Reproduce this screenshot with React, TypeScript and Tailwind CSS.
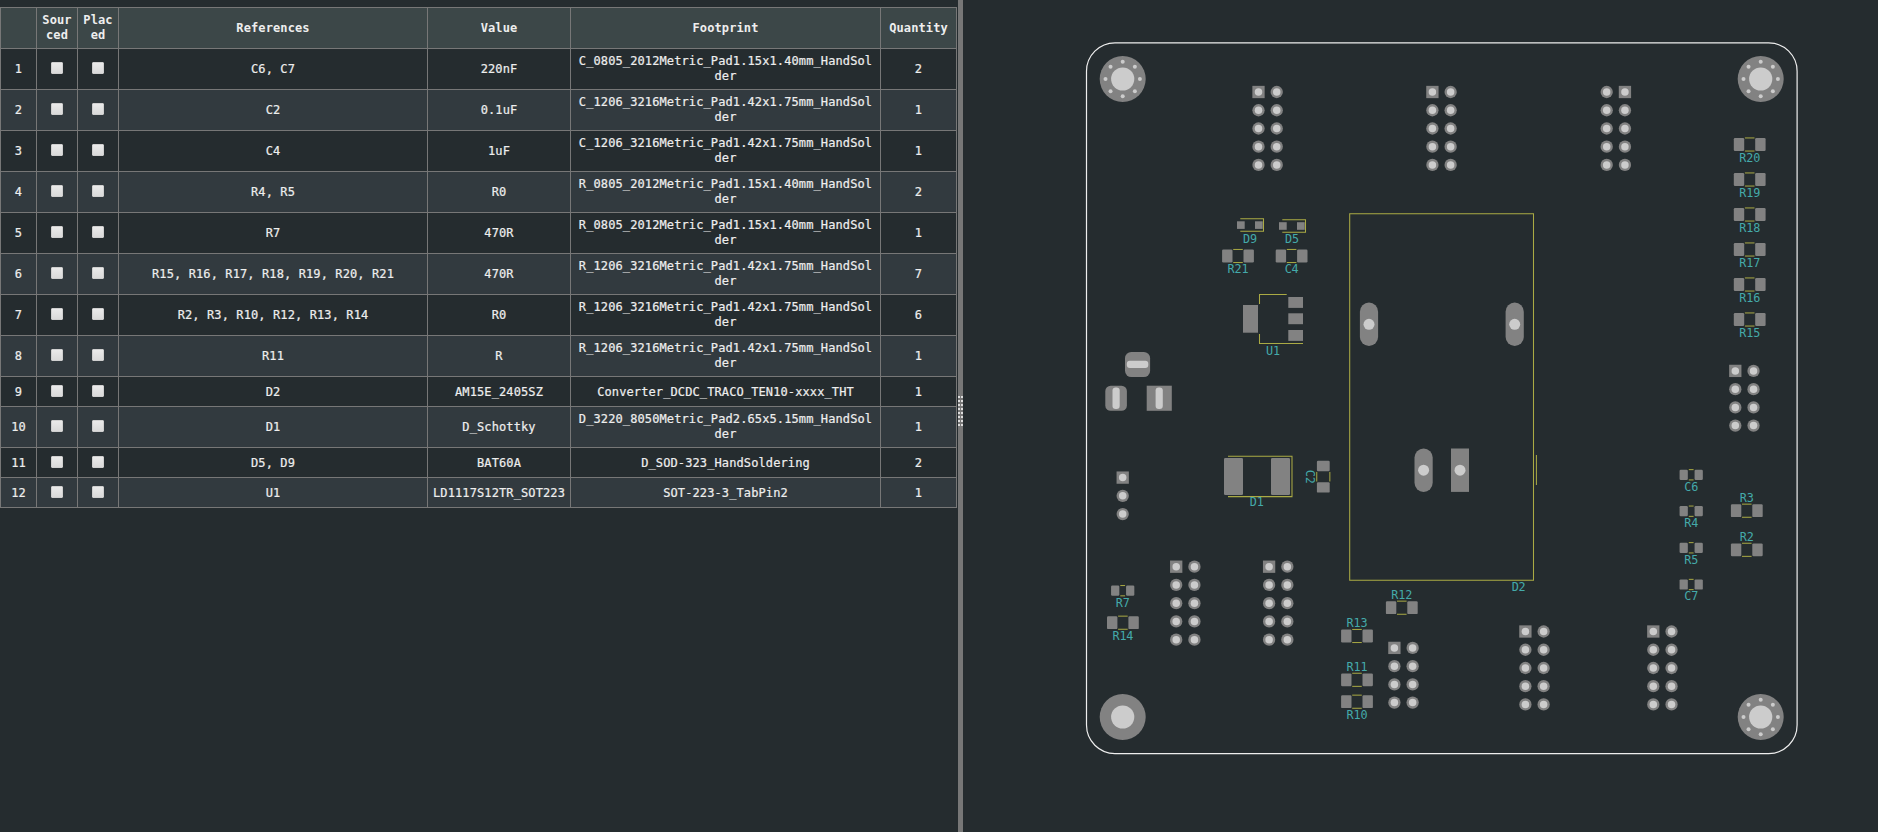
import React from "react";

type BomRow = { refs: string; value: string; footprint: string; qty: number; short?: boolean };

const F0805C = "C_0805_2012Metric_Pad1.15x1.40mm_HandSolder";
const F1206C = "C_1206_3216Metric_Pad1.42x1.75mm_HandSolder";
const F0805R = "R_0805_2012Metric_Pad1.15x1.40mm_HandSolder";
const F1206R = "R_1206_3216Metric_Pad1.42x1.75mm_HandSolder";

const rows: BomRow[] = [
  { refs: "C6, C7", value: "220nF", footprint: F0805C, qty: 2 },
  { refs: "C2", value: "0.1uF", footprint: F1206C, qty: 1 },
  { refs: "C4", value: "1uF", footprint: F1206C, qty: 1 },
  { refs: "R4, R5", value: "R0", footprint: F0805R, qty: 2 },
  { refs: "R7", value: "470R", footprint: F0805R, qty: 1 },
  { refs: "R15, R16, R17, R18, R19, R20, R21", value: "470R", footprint: F1206R, qty: 7 },
  { refs: "R2, R3, R10, R12, R13, R14", value: "R0", footprint: F1206R, qty: 6 },
  { refs: "R11", value: "R", footprint: F1206R, qty: 1 },
  { refs: "D2", value: "AM15E_2405SZ", footprint: "Converter_DCDC_TRACO_TEN10-xxxx_THT", qty: 1, short: true },
  { refs: "D1", value: "D_Schottky", footprint: "D_3220_8050Metric_Pad2.65x5.15mm_HandSolder", qty: 1 },
  { refs: "D5, D9", value: "BAT60A", footprint: "D_SOD-323_HandSoldering", qty: 2, short: true },
  { refs: "U1", value: "LD1117S12TR_SOT223", footprint: "SOT-223-3_TabPin2", qty: 1, short: true },
];

const CELL = "border-r border-b border-[#777777] px-[4px] pb-0 align-middle break-all";

function Checkbox() {
  return (
    <button
      type="button"
      role="checkbox"
      aria-checked="false"
      className="mx-auto block size-3 rounded-[1px] border border-[#cfcfcf] bg-linear-to-b from-[#eaeaea] to-[#dadada]"
    />
  );
}

function BomTable() {
  return (
    <table className="mt-[7px] w-[957px] table-fixed border-separate border-spacing-0 border-t border-l border-[#777777] text-center font-['DejaVu_Sans_Mono',monospace] text-[12px] leading-[15px] tracking-[0.11px] text-[#eeeeee]">
      <colgroup>
        <col className="w-[36px]" />
        <col className="w-[41px]" />
        <col className="w-[41px]" />
        <col className="w-[309px]" />
        <col className="w-[143px]" />
        <col className="w-[310px]" />
        <col className="w-[76px]" />
      </colgroup>
      <thead>
        <tr className="h-[41px] bg-[#3c4748] font-bold">
          <th className={`${CELL} pt-0`} />
          <th className={`${CELL} pt-0`}>Sourced</th>
          <th className={`${CELL} pt-0`}>Placed</th>
          <th className={`${CELL} pt-0`}>References</th>
          <th className={`${CELL} pt-0`}>Value</th>
          <th className={`${CELL} pt-0`}>Footprint</th>
          <th className={`${CELL} pt-0`}>Quantity</th>
        </tr>
      </thead>
      <tbody className="[-webkit-text-stroke:0.2px_#eeeeee]">
        {rows.map((r, i) => {
          const cell = `${CELL} ${r.short ? "pt-px" : "pt-0"}`;
          const check = `border-r border-b border-[#777777] px-[4px] pt-0 align-middle ${r.short ? "pb-px" : "pb-[3px]"}`;
          return (
            <tr key={r.refs} className={`${r.short ? "h-[30px]" : "h-[41px]"} ${i % 2 ? "bg-[#323a3f]" : "bg-[#252c2f]"}`}>
              <td className={cell}>{i + 1}</td>
              <td className={check}><Checkbox /></td>
              <td className={check}><Checkbox /></td>
              <td className={cell}>{r.refs}</td>
              <td className={cell}>{r.value}</td>
              <td className={cell}>
                <div className="px-[3px]">{r.footprint}</div>
              </td>
              <td className={cell}>{r.qty}</td>
            </tr>
          );
        })}
      </tbody>
    </table>
  );
}

const PAD = "#828282";
const HOLE = "#cccccc";
const SILK = "#aaaa44";
const TEXT = "#44aaaa";
const PITCH = 18.24;

function Label({ x, y, children, turn = false }: { x: number; y: number; children: string; turn?: boolean }) {
  return (
    <text
      x={x}
      y={y}
      textAnchor="middle"
      fontSize="11.8"
      letterSpacing="-0.15"
      fill={TEXT}
      className="font-['DejaVu_Sans_Mono',monospace]"
      transform={turn ? `rotate(90 ${x} ${y})` : undefined}
    >
      {children}
    </text>
  );
}

function Header({ x, y, n, cols = 2, square = 0 }: { x: number; y: number; n: number; cols?: number; square?: number }) {
  const pins: React.ReactNode[] = [];
  for (let r = 0; r < n; r++) {
    for (let c = 0; c < cols; c++) {
      const cx = x + c * PITCH;
      const cy = y + r * PITCH;
      pins.push(
        <g key={`${r}-${c}`}>
          {r === 0 && c === square ? (
            <rect x={cx - 6.15} y={cy - 6.15} width="12.3" height="12.3" fill={PAD} />
          ) : (
            <circle cx={cx} cy={cy} r="6.15" fill={PAD} />
          )}
          <circle cx={cx} cy={cy} r="3.75" fill={HOLE} />
        </g>,
      );
    }
  }
  return <g>{pins}</g>;
}

function Chip({ x, y, small = false, turn = false }: { x: number; y: number; small?: boolean; turn?: boolean }) {
  const off = small ? 7.5 : 10.7;
  const w = small ? 8.26 : 10.4;
  const h = small ? 10.2 : 12.8;
  const sx = small ? 2 : 4.4;
  const sy = small ? 5.15 : 6.55;
  return (
    <g transform={`translate(${x} ${y})${turn ? " rotate(90)" : ""}`}>
      <rect x={-off - w / 2} y={-h / 2} width={w} height={h} rx="1.2" fill={PAD} />
      <rect x={off - w / 2} y={-h / 2} width={w} height={h} rx="1.2" fill={PAD} />
      <path d={`M${-sx} ${-sy}H${sx}M${-sx} ${sy}H${sx}`} stroke={SILK} strokeWidth="1" strokeLinecap="round" />
    </g>
  );
}

function Mount({ x, y, vias = true }: { x: number; y: number; vias?: boolean }) {
  return (
    <g>
      <circle cx={x} cy={y} r="23" fill={PAD} />
      <circle cx={x} cy={y} r="11.6" fill={HOLE} />
      {vias &&
        [0, 1, 2, 3, 4, 5, 6, 7].map((k) => (
          <circle
            key={k}
            cx={x + 17.2 * Math.cos((k * Math.PI) / 4)}
            cy={y + 17.2 * Math.sin((k * Math.PI) / 4)}
            r="2"
            fill={HOLE}
          />
        ))}
    </g>
  );
}

const bigChips: [number, number][] = [
  [1749.7, 144.5], [1749.7, 179.5], [1749.7, 214.5], [1749.7, 249.5], [1749.7, 284.5], [1749.7, 319.5],
  [1746.8, 510.7], [1746.8, 549.8], [1122.9, 622.7], [1401.8, 607.7], [1357, 636], [1357, 679.8],
  [1357, 701.7], [1238, 256], [1291.6, 256],
];
const smallChips: [number, number][] = [
  [1691.2, 474.8], [1691.2, 511.2], [1691.2, 547.8], [1691.2, 584.5], [1122.7, 590.7],
];
const labels: [string, number, number][] = [
  ["R20", 1749.7, 161.5], ["R19", 1749.7, 196.5], ["R18", 1749.7, 231.5], ["R17", 1749.7, 266.5],
  ["R16", 1749.7, 301.5], ["R15", 1749.7, 336.5], ["C6", 1691.2, 490.6], ["R4", 1691.2, 527.2],
  ["R5", 1691.2, 563.8], ["C7", 1691.2, 600.4], ["R3", 1746.8, 501.6], ["R2", 1746.8, 540.8],
  ["R7", 1122.7, 606.6], ["R14", 1122.9, 639.6], ["R12", 1401.8, 598.8], ["R13", 1357, 627.2],
  ["R11", 1357, 670.8], ["R10", 1357, 718.8], ["R21", 1238, 273.2], ["C4", 1291.6, 273.2],
  ["D9", 1250, 242.5], ["D5", 1292, 243], ["U1", 1273, 355.2], ["D1", 1256.8, 506.2], ["D2", 1518.6, 590.5],
];

function Board() {
  return (
    <svg viewBox="963 0 915 832" className="block h-[832px] w-[915px]" fill="none">
      <rect x="1086.5" y="42.8" width="710.6" height="710.8" rx="28.5" stroke="#eeeeee" strokeWidth="1.2" />

      <Mount x={1122.7} y={79} />
      <Mount x={1760.7} y={79} />
      <Mount x={1122.7} y={717} vias={false} />
      <Mount x={1760.7} y={717} />

      <Header x={1258.5} y={92} n={5} />
      <Header x={1432.4} y={92} n={5} />
      <Header x={1606.7} y={92} n={5} square={1} />
      <Header x={1176.2} y={566.7} n={5} />
      <Header x={1269.1} y={566.7} n={5} />
      <Header x={1394.4} y={647.9} n={4} />
      <Header x={1525.4} y={631.5} n={5} />
      <Header x={1653.3} y={631.5} n={5} />
      <Header x={1735.3} y={370.9} n={4} />
      <Header x={1122.7} y={477.6} n={3} cols={1} />

      <g fill={PAD}>
        <rect x="1125" y="351.9" width="25.1" height="25.1" rx="6.3" />
        <rect x="1105.3" y="385.7" width="21.6" height="25.1" rx="5.4" />
        <rect x="1146.7" y="385.7" width="25.1" height="25.1" />
      </g>
      <g fill={HOLE}>
        <rect x="1126.8" y="360.8" width="21.5" height="7.2" rx="3" />
        <rect x="1112.5" y="387.4" width="7.2" height="21.6" rx="3.2" />
        <rect x="1155.6" y="387.4" width="7.2" height="21.6" rx="3.2" />
      </g>

      {bigChips.map(([x, y]) => <Chip key={`${x}-${y}`} x={x} y={y} />)}
      {smallChips.map(([x, y]) => <Chip key={`${x}-${y}`} x={x} y={y} small />)}
      <Chip x={1323.3} y={476.7} turn />

      <g fill={PAD}>
        <rect x="1237" y="221.3" width="7.7" height="7.6" />
        <rect x="1255" y="221.3" width="7.7" height="7.6" />
        <rect x="1279" y="222.2" width="7.7" height="7.6" />
        <rect x="1297" y="222.2" width="7.7" height="7.6" />
        <rect x="1243" y="305" width="15" height="27.7" />
        <rect x="1288.3" y="297" width="14.7" height="10.9" />
        <rect x="1288.3" y="313.3" width="14.7" height="10.9" />
        <rect x="1288.3" y="330" width="14.7" height="10.9" />
        <rect x="1224" y="458" width="19" height="37" rx="1.3" />
        <rect x="1271" y="458" width="19" height="37" rx="1.3" />
        <rect x="1359.9" y="302.6" width="18.2" height="43.4" rx="9.1" />
        <rect x="1505.6" y="302.6" width="18.2" height="43.4" rx="9.1" />
        <rect x="1414.5" y="448.5" width="18.2" height="43.4" rx="9.1" />
        <rect x="1451" y="448.5" width="18" height="43.4" />
      </g>
      <g fill={HOLE}>
        <circle cx="1369" cy="324.3" r="5.5" />
        <circle cx="1514.7" cy="324.3" r="5.5" />
        <circle cx="1423.6" cy="470.2" r="5.5" />
        <circle cx="1460" cy="470.2" r="5.5" />
      </g>

      <g stroke={SILK} strokeWidth="1.05">
        <path d="M1240.3 218.7H1263.5V231.2H1240.3" />
        <path d="M1282.3 219.7H1305.5V232.2H1282.3" />
        <path d="M1286.7 294.5H1259.5V304M1259.5 334V343.4H1303" />
        <path d="M1228 456.2H1292V496.6H1228" />
        <path d="M1349.7 213.8H1533.5V580.2H1349.7Z" />
        <path d="M1536.4 455V485" />
      </g>

      {labels.map(([t, x, y]) => <Label key={t} x={x} y={y}>{t}</Label>)}
      <Label x={1306} y={476.8} turn>C2</Label>
    </svg>
  );
}

export default function App() {
  return (
    <div className="flex h-[832px] w-[1878px] overflow-hidden bg-[#252c2f]">
      <div className="w-[958px] shrink-0">
        <BomTable />
      </div>
      <div className="flex w-[5px] shrink-0 items-center justify-center bg-[#777777] pb-[10px]">
        <div className="grid grid-cols-2 gap-x-px gap-y-[2px]">
          {Array.from({ length: 16 }, (_, i) => (
            <span key={i} className="size-[2px] bg-[#dddddd]" />
          ))}
        </div>
      </div>
      <Board />
    </div>
  );
}
